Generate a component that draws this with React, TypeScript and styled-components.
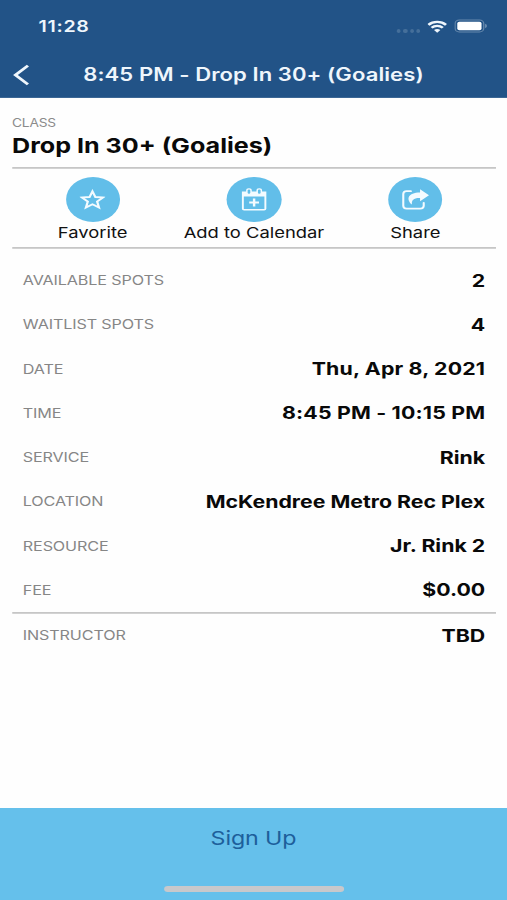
import React from "react";
import styled, { createGlobalStyle } from "styled-components";

const GlobalStyle = createGlobalStyle`
  *, *::before, *::after { box-sizing: border-box; }
  body {
    margin: 0;
    background: #fff;
    font-family: Inter, Roboto, "Liberation Sans", sans-serif;
    -webkit-font-smoothing: antialiased;
  }
`;

const Viewport = styled.div`
  width: 507px;
  height: 900px;
  overflow: hidden;
`;

/* A 414pt wide phone layout, widened to fill the viewport. */
const Screen = styled.div`
  display: flex;
  flex-direction: column;
  width: 414px;
  height: 900px;
  background: #fefefe;
  transform: scaleX(1.22464);
  transform-origin: 0 0;
`;

const Header = styled.header`
  height: 98px;
  flex: none;
  background: #225387;
  border-bottom: 1px solid #3c6795;
  color: #eff6fc;
`;

const StatusBar = styled.div`
  display: flex;
  justify-content: space-between;
  height: 52px;
  padding: 0 16.5px 0 31.5px;
`;

const Clock = styled.span`
  font-size: 16px;
  font-weight: 600;
  line-height: 53px;
  letter-spacing: 0.55px;
`;

const StatusIcons = styled.div`
  display: flex;
  align-items: center;
  height: 52px;
`;

const Dots = styled.div`
  display: flex;
  gap: 1.9px;
  margin: 9px 6px 0 0;
`;

const Dot = styled.i`
  width: 3.3px;
  height: 4px;
  border-radius: 50%;
  background: #456f9a;
`;

const WifiIcon = styled.svg`
  width: 16px;
  height: 13px;
  margin-right: 5.5px;
`;

const BatteryIcon = styled.svg`
  width: 27px;
  height: 14px;
`;

const NavBar = styled.div`
  display: grid;
  grid-template-columns: 40px 1fr 40px;
  align-items: center;
  height: 44px;
`;

const BackButton = styled.button`
  display: flex;
  padding: 0 0 0 9.5px;
  border: 0;
  background: none;
  color: inherit;
`;

const NavTitle = styled.h1`
  margin: 0;
  font-size: 18px;
  font-weight: 600;
  line-height: 45px;
  letter-spacing: 0.06px;
  text-align: center;
  white-space: nowrap;
`;

const Content = styled.main`
  flex: 1;
  padding: 17px 9px 0 9.8px;
  color: #090909;
`;

const Overline = styled.div`
  font-size: 11.2px;
  line-height: 16px;
  letter-spacing: -0.15px;
  color: #8b8b8b;
`;

const ClassName = styled.h2`
  margin: 0;
  height: 36px;
  font-size: 20.5px;
  font-weight: 700;
  line-height: 29px;
  white-space: nowrap;
`;

const Divider = styled.hr`
  height: 2px;
  margin: 0;
  border: 0;
  background: linear-gradient(#c6c6c6 50%, #d2d2d2 50%);
`;

const Actions = styled.div`
  display: grid;
  grid-template-columns: repeat(3, 1fr);
  height: 78px;
  padding-top: 8px;
`;

const Action = styled.button`
  display: flex;
  flex-direction: column;
  align-items: center;
  padding: 0;
  border: 0;
  background: none;
  color: #111;
  font: 400 15px/22px Inter, sans-serif;
  white-space: nowrap;
`;

const IconCircle = styled.span`
  display: flex;
  align-items: center;
  justify-content: center;
  width: 44.3px;
  height: 45px;
  border-radius: 50%;
  background: #62bee9;
  color: #f4fbff;
`;

const DetailList = styled.dl`
  margin: 0;
`;

const DetailRow = styled.div`
  display: flex;
  align-items: center;
  justify-content: space-between;
  height: 44.28px;
  padding: 0 8.8px;
  white-space: nowrap;
`;

const Details = styled(DetailList)`
  height: 363px;
  padding-top: 9px;
`;

const InstructorRow = styled(DetailRow)`
  height: 42px;
`;

const Label = styled.dt`
  font-size: 13.2px;
  letter-spacing: -0.1px;
  color: #868686;
`;

const Value = styled.dd<{ $numeric?: boolean }>`
  margin: 0;
  font-size: 17.4px;
  font-weight: 700;
  letter-spacing: ${({ $numeric }) => ($numeric ? "0.15px" : "0")};
`;

const SignUpBar = styled.button`
  display: flex;
  flex-direction: column;
  align-items: center;
  justify-content: space-between;
  flex: none;
  height: 92px;
  padding: 16px 0 8.5px;
  border: 0;
  background: #65c0eb;
  color: #1d5f9b;
  font: 400 19px/30px Inter, sans-serif;
  letter-spacing: -0.1px;
`;

const HomeIndicator = styled.span`
  width: 147px;
  height: 5.5px;
  border-radius: 3px;
  background: #c8c8cb;
`;

const StarIcon = () => (
  <svg width="21" height="21" viewBox="0 0 22 22" fill="none" stroke="currentColor" strokeWidth="1.9">
    <path d="M11 2.4 13.5 8.4 20 8.8 15 13.1 16.6 19.4 11 16 5.4 19.4 7 13.1 2 8.8 8.5 8.4Z" />
  </svg>
);

const CalendarIcon = () => (
  <svg width="21" height="23" viewBox="0 0 21 23" fill="none">
    <path d="M1.3 4.2h18.4v16.6a1 1 0 0 1-1 1H2.3a1 1 0 0 1-1-1Z" stroke="currentColor" strokeWidth="1.6" />
    <path d="M1 4h19v4.6H1Z" fill="currentColor" />
    <rect x="4.6" y=".8" width="3.4" height="5.6" rx="1.6" fill="#62bee9" stroke="currentColor" strokeWidth="1.2" />
    <rect x="13" y=".8" width="3.4" height="5.6" rx="1.6" fill="#62bee9" stroke="currentColor" strokeWidth="1.2" />
    <path d="M10.5 10.6v8M6.5 14.6h8" stroke="currentColor" strokeWidth="2" />
  </svg>
);

const ShareIcon = () => (
  <svg width="23" height="21" viewBox="0 0 23 21" fill="none">
    <path
      d="M7.5 2.2H4Q1.3 2.2 1.3 5v11.8q0 2.8 2.7 2.8h11.2q2.8 0 2.8-2.8v-3"
      stroke="currentColor"
      strokeWidth="1.7"
      strokeLinecap="round"
    />
    <path d="M15 0.2 22.3 6.2 15 12.3V9.1C10.2 8.8 7.8 11 8.4 15.6 3.3 10.3 5 3.4 15 3.4Z" fill="currentColor" />
  </svg>
);

const actions = [
  { label: "Favorite", Icon: StarIcon },
  { label: "Add to Calendar", Icon: CalendarIcon },
  { label: "Share", Icon: ShareIcon },
];

const details = [
  { label: "AVAILABLE SPOTS", value: "2" },
  { label: "WAITLIST SPOTS", value: "4" },
  { label: "DATE", value: "Thu, Apr 8, 2021", numeric: true },
  { label: "TIME", value: "8:45 PM - 10:15 PM", numeric: true },
  { label: "SERVICE", value: "Rink" },
  { label: "LOCATION", value: "McKendree Metro Rec Plex" },
  { label: "RESOURCE", value: "Jr. Rink 2" },
  { label: "FEE", value: "$0.00" },
];

export default function App() {
  return (
    <Viewport>
      <GlobalStyle />
      <Screen>
        <Header>
          <StatusBar>
            <Clock>11:28</Clock>
            <StatusIcons>
              <Dots>
                <Dot />
                <Dot />
                <Dot />
                <Dot />
              </Dots>
              <WifiIcon viewBox="0 0 16 13" fill="none" stroke="currentColor" strokeWidth="2.3">
                <path d="M.8 4.9a10.3 10.3 0 0 1 14.4 0M3.4 7.8a6.6 6.6 0 0 1 9.2 0" />
                <path d="M5.4 10.1a3.8 3.8 0 0 1 5.2 0L8 12.8Z" fill="currentColor" stroke="none" />
              </WifiIcon>
              <BatteryIcon viewBox="0 0 27 14">
                <rect x=".6" y="1.1" width="23.4" height="11.8" rx="3.4" fill="none" stroke="#6789ad" strokeWidth="1" />
                <rect x="2.4" y="2.8" width="19.8" height="8.4" rx="1.7" fill="#fff" />
                <path d="M25 4.8q1.7.6 1.7 2.2T25 9.2Z" fill="#6789ad" />
              </BatteryIcon>
            </StatusIcons>
          </StatusBar>
          <NavBar>
            <BackButton aria-label="Back">
              <svg width="15" height="22" viewBox="0 0 15 22" fill="none" stroke="currentColor" strokeWidth="2.6">
                <path d="M12.8 1.6 2.6 11 12.8 20.4" />
              </svg>
            </BackButton>
            <NavTitle>8:45 PM - Drop In 30+ (Goalies)</NavTitle>
          </NavBar>
        </Header>
        <Content>
          <Overline>CLASS</Overline>
          <ClassName>Drop In 30+ (Goalies)</ClassName>
          <Divider />
          <Actions>
            {actions.map(({ label, Icon }) => (
              <Action key={label}>
                <IconCircle>
                  <Icon />
                </IconCircle>
                {label}
              </Action>
            ))}
          </Actions>
          <Divider />
          <Details>
            {details.map(({ label, value, numeric }) => (
              <DetailRow key={label}>
                <Label>{label}</Label>
                <Value $numeric={numeric}>{value}</Value>
              </DetailRow>
            ))}
          </Details>
          <Divider />
          <DetailList>
            <InstructorRow>
              <Label>INSTRUCTOR</Label>
              <Value>TBD</Value>
            </InstructorRow>
          </DetailList>
        </Content>
        <SignUpBar>
          Sign Up
          <HomeIndicator />
        </SignUpBar>
      </Screen>
    </Viewport>
  );
}
